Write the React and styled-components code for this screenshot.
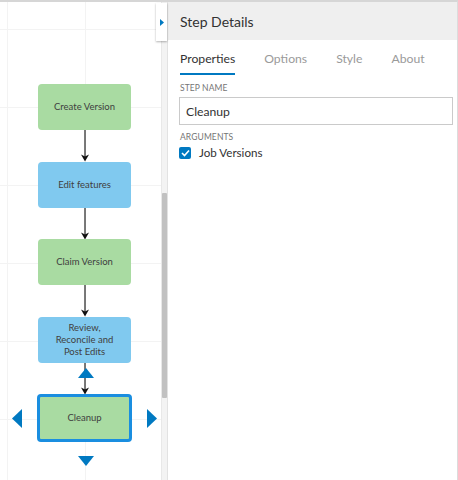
import React from "react";
import styled, { createGlobalStyle } from "styled-components";

const Global = createGlobalStyle`
  html, body { margin: 0; padding: 0; background: #fff; }
  body { font-family: Lato, "Open Sans", sans-serif; color: #323232; }
  * { box-sizing: border-box; }
`;

const Frame = styled.div`
  width: 458px;
  height: 480px;
  display: flex;
  border-top: 2px solid #d6d6d6;
  border-right: 1px solid #dcdcdc;
  overflow: hidden;
  position: relative;
`;

const Canvas = styled.div`
  width: 161px;
  height: 100%;
  flex: none;
  position: relative;
  background-color: #fff;
  background-image:
    linear-gradient(to right, #f3f3f3 1px, transparent 1px),
    linear-gradient(to bottom, #f3f3f3 1px, transparent 1px);
  background-size: 78px 78px;
  background-position: 7px 27px;
`;

const Flow = styled.div`
  display: flex;
  flex-direction: column;
  align-items: flex-start;
  padding: 82px 0 0 38px;
`;

const Node = styled.div`
  position: relative;
  width: ${(p) => (p.$selected ? 95 : 93)}px;
  height: ${(p) => (p.$selected ? 48 : 46)}px;
  margin-left: ${(p) => (p.$selected ? -1 : 0)}px;
  border-radius: 4px;
  background: ${(p) => (p.$kind === "blue" ? "#80c9ef" : "#a9dba2")};
  border: ${(p) => (p.$selected ? "3px solid #1a8ee0" : "none")};
  display: flex;
  align-items: center;
  justify-content: center;
  text-align: center;
  font-size: 9.5px;
  line-height: 12px;
  color: #404040;
  padding: 0 10px;
`;

const Connector = styled.svg`
  display: block;
  width: 93px;
  height: 31.5px;
  flex: none;
`;

const Handle = styled.svg`
  position: absolute;
  fill: #0079c1;
  ${(p) => p.$pos === "up" && "top: -29px; left: 38px;"}
  ${(p) => p.$pos === "down" && "bottom: -27px; left: 38px;"}
  ${(p) => p.$pos === "left" && "left: -28px; top: 12px;"}
  ${(p) => p.$pos === "right" && "right: -28px; top: 12px;"}
`;

const ScrollTrack = styled.div`
  width: 7px;
  flex: none;
  height: 100%;
  background: #f3f3f3;
  border-left: 1px solid #e8e8e8;
  border-right: 1px solid #e2e2e2;
  padding-top: 191px;
`;

const ScrollThumb = styled.div`
  width: 5px;
  height: 205px;
  background: #c1c1c1;
  border-radius: 1px;
`;

const Panel = styled.div`
  flex: 1;
  display: flex;
  flex-direction: column;
  min-width: 0;
`;

const Header = styled.div`
  height: 38px;
  background: #efefef;
  display: flex;
  align-items: center;
  padding-left: 12px;
  font-size: 14px;
  color: #323232;
`;

const Toggle = styled.div`
  position: absolute;
  left: 156px;
  top: 1px;
  width: 11px;
  height: 38px;
  background: #fff;
  box-shadow: 0 1px 2px rgba(0, 0, 0, 0.3);
  display: flex;
  align-items: center;
  justify-content: center;
`;

const Body = styled.div`
  padding: 0 5px 0 11px;
`;

const Tabs = styled.div`
  display: flex;
  gap: 29px;
  padding-left: 1px;
`;

const Tab = styled.div`
  font-size: 12.2px;
  padding: 10px 0 6px;
  line-height: 17px;
  color: ${(p) => (p.$active ? "#323232" : "#9a9a9a")};
  border-bottom: 2px solid ${(p) => (p.$active ? "#0079c1" : "transparent")};
`;

const Label = styled.div`
  font-size: 8.5px;
  letter-spacing: 0.1px;
  text-transform: uppercase;
  color: #757575;
  margin: ${(p) => p.$top || 8}px 0 4px 1px;
`;

const Input = styled.input`
  display: block;
  width: 274px;
  height: 28px;
  border: 1px solid #cacaca;
  padding: 0 6px;
  font-family: Lato, "Open Sans", sans-serif;
  font-size: 12.2px;
  color: #323232;
  outline: none;
`;

const CheckRow = styled.label`
  display: flex;
  align-items: center;
  gap: 8px;
  font-size: 11.6px;
  color: #323232;
  margin-top: 2px;
`;

const Box = styled.span`
  width: 12px;
  height: 12px;
  border-radius: 2px;
  background: #0079c1;
  display: flex;
  align-items: center;
  justify-content: center;
`;

const Arrow = () => (
  <Connector viewBox="0 0 93 31.5">
    <line x1="47" y1="0" x2="47" y2="27" stroke="#222" strokeWidth="1.2" />
    <path d="M43 24.5 L47 31.5 L51 24.5 L47 26.5 Z" fill="#111" />
  </Connector>
);

const steps = [
  { name: "Create Version", kind: "green" },
  { name: "Edit features", kind: "blue" },
  { name: "Claim Version", kind: "green" },
  { name: "Review, Reconcile and Post Edits", kind: "blue" },
  { name: "Cleanup", kind: "green", selected: true },
];

export default function App() {
  return (
    <>
      <Global />
      <Frame>
        <Canvas>
          <Flow>
            {steps.map((s, i) => (
              <React.Fragment key={s.name}>
                {i > 0 && <Arrow />}
                <Node $kind={s.kind} $selected={s.selected}>
                  {s.name}
                  {s.selected && (
                    <>
                      <Handle $pos="up" width="16" height="10" viewBox="0 0 16 10">
                        <path d="M8 0 L16 10 L0 10 Z" />
                      </Handle>
                      <Handle $pos="down" width="16" height="10" viewBox="0 0 16 10">
                        <path d="M0 0 L16 0 L8 10 Z" />
                      </Handle>
                      <Handle $pos="left" width="10" height="19" viewBox="0 0 10 19">
                        <path d="M10 0 L10 19 L0 9.5 Z" />
                      </Handle>
                      <Handle $pos="right" width="10" height="19" viewBox="0 0 10 19">
                        <path d="M0 0 L10 9.5 L0 19 Z" />
                      </Handle>
                    </>
                  )}
                </Node>
              </React.Fragment>
            ))}
          </Flow>
        </Canvas>
        <ScrollTrack>
          <ScrollThumb />
        </ScrollTrack>
        <Panel>
          <Header>Step Details</Header>
          <Body>
            <Tabs>
              <Tab $active>Properties</Tab>
              <Tab>Options</Tab>
              <Tab>Style</Tab>
              <Tab>About</Tab>
            </Tabs>
            <Label $top={8}>Step Name</Label>
            <Input defaultValue="Cleanup" />
            <Label $top={7}>Arguments</Label>
            <CheckRow>
              <Box>
                <svg width="9" height="8" viewBox="0 0 9 8">
                  <path d="M1 4 L3.5 6.5 L8 1.5" stroke="#fff" strokeWidth="1.6" fill="none" />
                </svg>
              </Box>
              Job Versions
            </CheckRow>
          </Body>
        </Panel>
        <Toggle>
          <svg width="4" height="7" viewBox="0 0 4 7">
            <path d="M0 0 L4 3.5 L0 7 Z" fill="#0079c1" />
          </svg>
        </Toggle>
      </Frame>
    </>
  );
}
